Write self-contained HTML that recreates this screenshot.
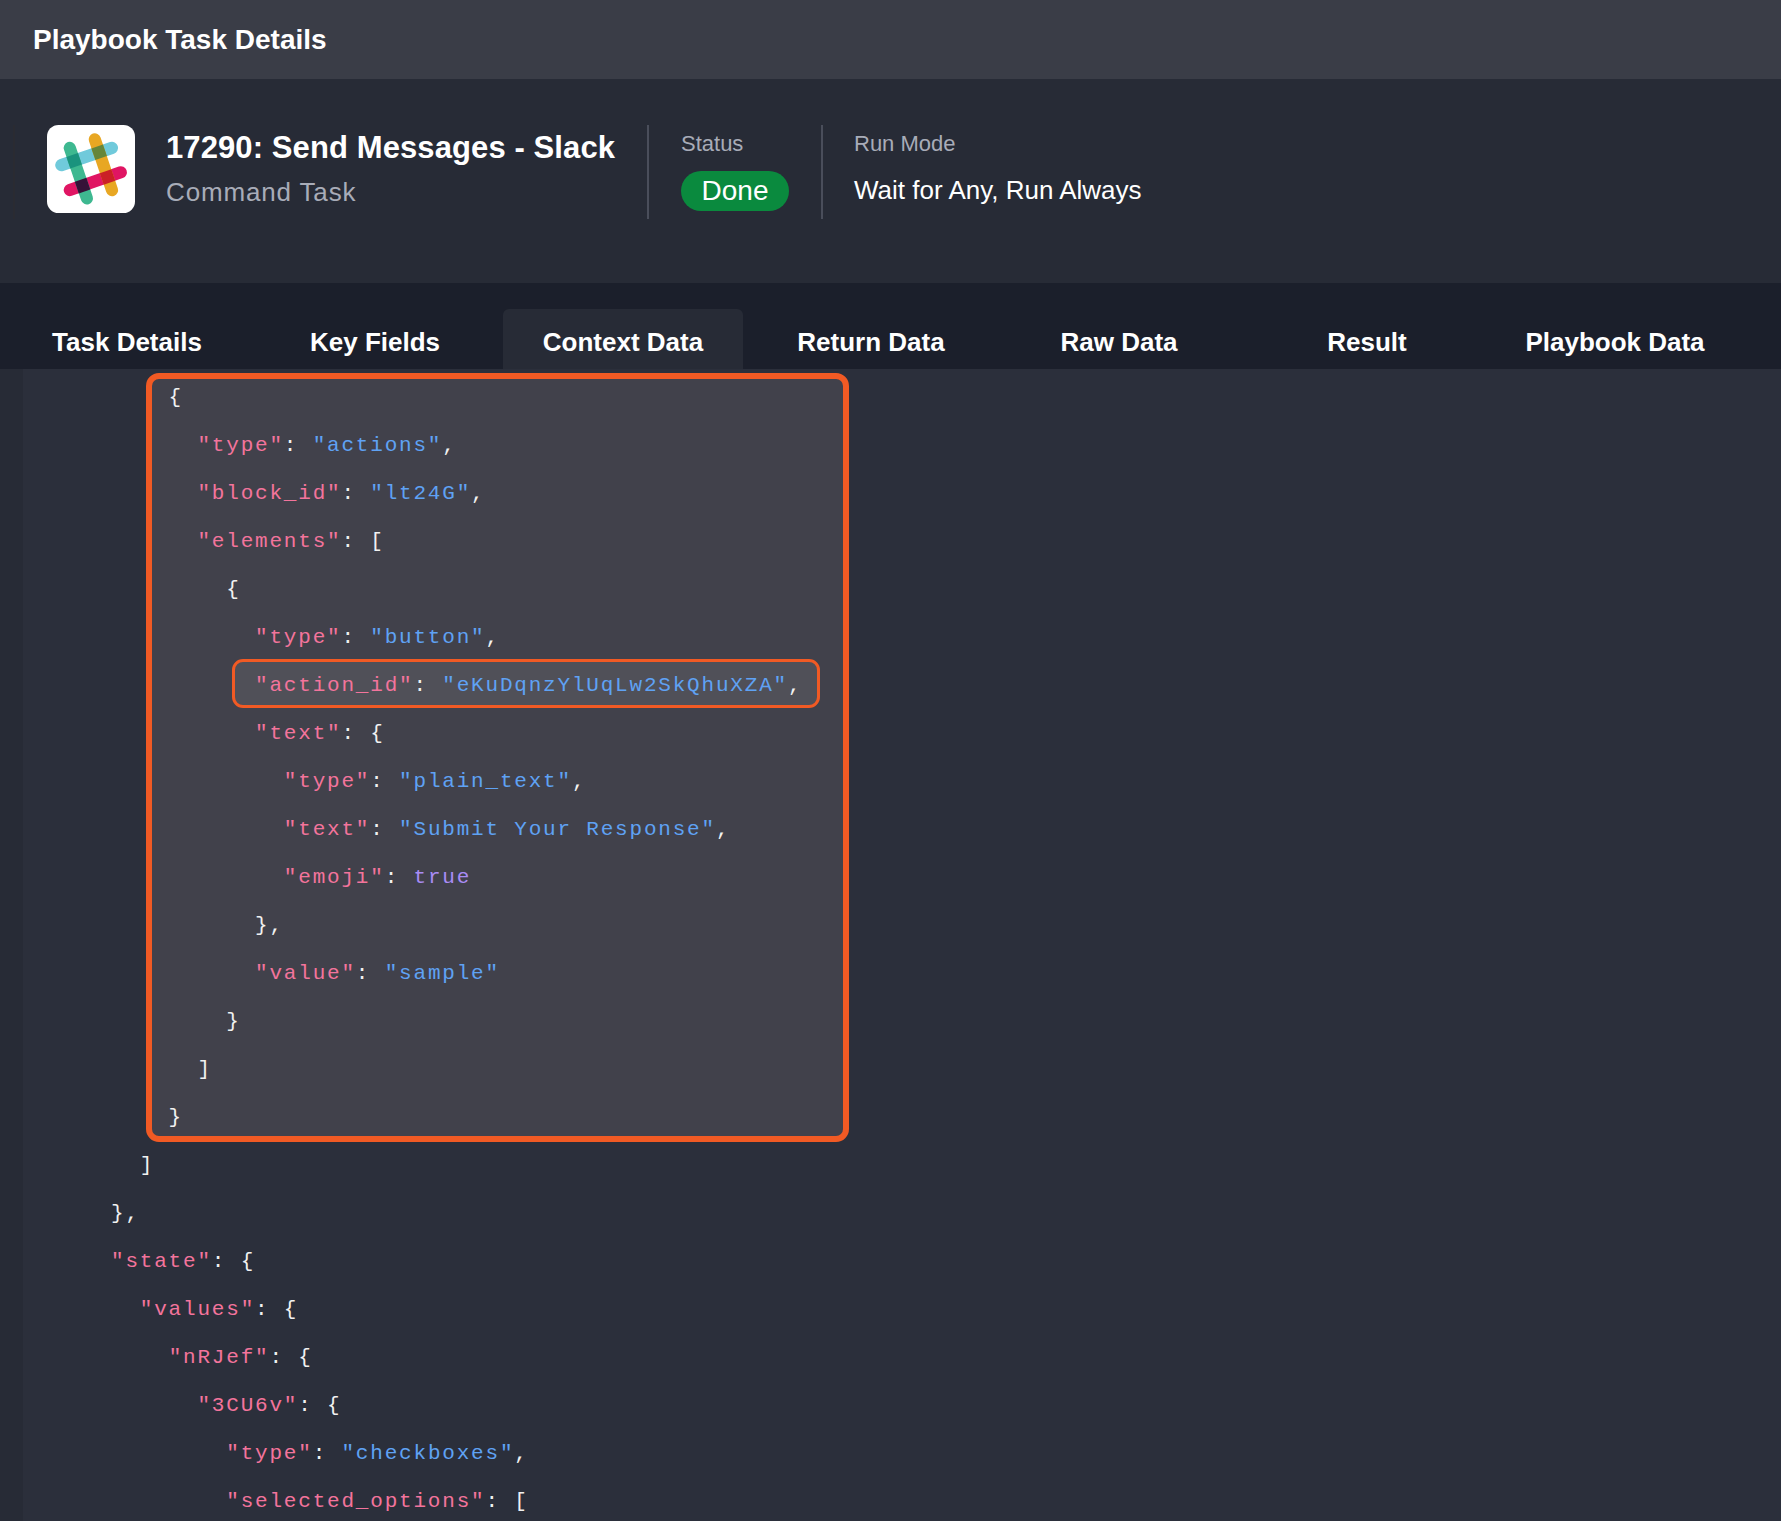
<!DOCTYPE html>
<html lang="en">
<head>
<meta charset="utf-8">
<title>Playbook Task Details</title>
<style>
*{box-sizing:border-box;margin:0;padding:0}
html,body{width:1781px;height:1521px;overflow:hidden;background:#2b2f3b}
body{position:relative;font-family:"Liberation Sans",sans-serif;color:#fff}
.abs{position:absolute;white-space:nowrap}
#hdr{left:0;top:0;width:1781px;height:79px;background:#3a3d47}
#hdr span{position:absolute;left:33px;top:24px;font-size:28px;line-height:32px;font-weight:bold}
#info{left:0;top:79px;width:1781px;height:204px;background:#272b36}
#logo{left:47px;top:125px;width:88px;height:88px}
#title{left:166px;top:129px;font-size:31px;line-height:38px;font-weight:bold;letter-spacing:0.1px}
#sub{left:166px;top:176px;font-size:26px;line-height:32px;letter-spacing:0.85px;color:#a8acb8}
.vsep{width:2px;height:94px;top:125px;background:#4a4e5b}
.lbl{font-size:22px;line-height:28px;color:#a8acb8;top:130px}
#done{left:681px;top:171px;width:108px;height:40px;border-radius:20px;background:#0a8a3e;font-size:28px;line-height:40px;text-align:center}
#mode{left:854px;top:174px;font-size:26px;line-height:32px}
#tabs{left:0;top:283px;width:1781px;height:86px;background:#1b1f2b}
#active{left:503px;top:309px;width:240px;height:60px;background:#272b36;border-radius:6px 6px 0 0}
.tab{top:326px;font-size:26px;line-height:32px;font-weight:bold;text-align:center;width:248px}
#gutter{left:0;top:369px;width:23px;height:1152px;background:#272b36}
#box{left:146px;top:373px;width:703px;height:769px;border:6px solid #f15a24;border-radius:13px;background:#41414b}
#hl{left:232px;top:659px;width:588px;height:49px;border:3px solid #f15a24;border-radius:11px;background:#505058}
#code{left:24.6px;top:374px;font-family:"Liberation Mono",monospace;font-size:21px;letter-spacing:1.8px;line-height:48px;white-space:pre;color:#f1f1f1}
.k{color:#f3749c}.s{color:#5fa2f4}.b{color:#a98cf5}
</style>
</head>
<body>
<div id="hdr" class="abs"><span>Playbook Task Details</span></div>
<div id="info" class="abs"></div>
<svg id="logo" class="abs" width="88" height="88" viewBox="0 0 88 88">
<rect x="0" y="0" width="88" height="88" rx="11.5" fill="#fff"/>
<g stroke-width="12.2" stroke-linecap="round" fill="none">
<line x1="14.3" y1="40.1" x2="65" y2="22.9" stroke="#70cadb"/>
<line x1="22.8" y1="65.1" x2="73.8" y2="47.3" stroke="#e01563"/>
<line x1="22.8" y1="22.9" x2="39.9" y2="73.4" stroke="#3eb890"/>
<line x1="47.8" y1="14.4" x2="65" y2="65.1" stroke="#e8a723"/>
</g>
<polygon points="23.33,43.48 19.42,31.92 30.97,28.00 34.88,39.56" fill="#1a937d"/>
<polygon points="48.34,34.99 44.42,23.44 55.98,19.52 59.90,31.07" fill="#65863a"/>
<polygon points="31.78,68.43 27.86,56.87 39.38,52.85 43.30,64.41" fill="#361238"/>
<polygon points="56.73,59.72 52.81,48.16 64.33,44.14 68.25,55.70" fill="#cb2026"/>
</svg>
<div class="abs" style="left:13px;top:125px;width:2px;height:94px;background:#2a2b32"></div>
<div id="title" class="abs">17290: Send Messages - Slack</div>
<div id="sub" class="abs">Command Task</div>
<div class="abs vsep" style="left:647px"></div>
<div class="abs lbl" style="left:681px">Status</div>
<div id="done" class="abs">Done</div>
<div class="abs vsep" style="left:821px"></div>
<div class="abs lbl" style="left:854px">Run Mode</div>
<div id="mode" class="abs">Wait for Any, Run Always</div>
<div id="tabs" class="abs"></div>
<div id="active" class="abs"></div>
<div class="abs tab" style="left:3px">Task Details</div>
<div class="abs tab" style="left:251px">Key Fields</div>
<div class="abs tab" style="left:499px">Context Data</div>
<div class="abs tab" style="left:747px">Return Data</div>
<div class="abs tab" style="left:995px">Raw Data</div>
<div class="abs tab" style="left:1243px">Result</div>
<div class="abs tab" style="left:1491px">Playbook Data</div>
<div id="gutter" class="abs"></div>
<div id="box" class="abs"></div>
<div id="hl" class="abs"></div>
<pre id="code" class="abs">          {
            <span class="k">"type"</span>: <span class="s">"actions"</span>,
            <span class="k">"block_id"</span>: <span class="s">"lt24G"</span>,
            <span class="k">"elements"</span>: [
              {
                <span class="k">"type"</span>: <span class="s">"button"</span>,
                <span class="k">"action_id"</span>: <span class="s">"eKuDqnzYlUqLw2SkQhuXZA"</span>,
                <span class="k">"text"</span>: {
                  <span class="k">"type"</span>: <span class="s">"plain_text"</span>,
                  <span class="k">"text"</span>: <span class="s">"Submit Your Response"</span>,
                  <span class="k">"emoji"</span>: <span class="b">true</span>
                },
                <span class="k">"value"</span>: <span class="s">"sample"</span>
              }
            ]
          }
        ]
      },
      <span class="k">"state"</span>: {
        <span class="k">"values"</span>: {
          <span class="k">"nRJef"</span>: {
            <span class="k">"3CU6v"</span>: {
              <span class="k">"type"</span>: <span class="s">"checkboxes"</span>,
              <span class="k">"selected_options"</span>: [
</pre>
</body>
</html>
